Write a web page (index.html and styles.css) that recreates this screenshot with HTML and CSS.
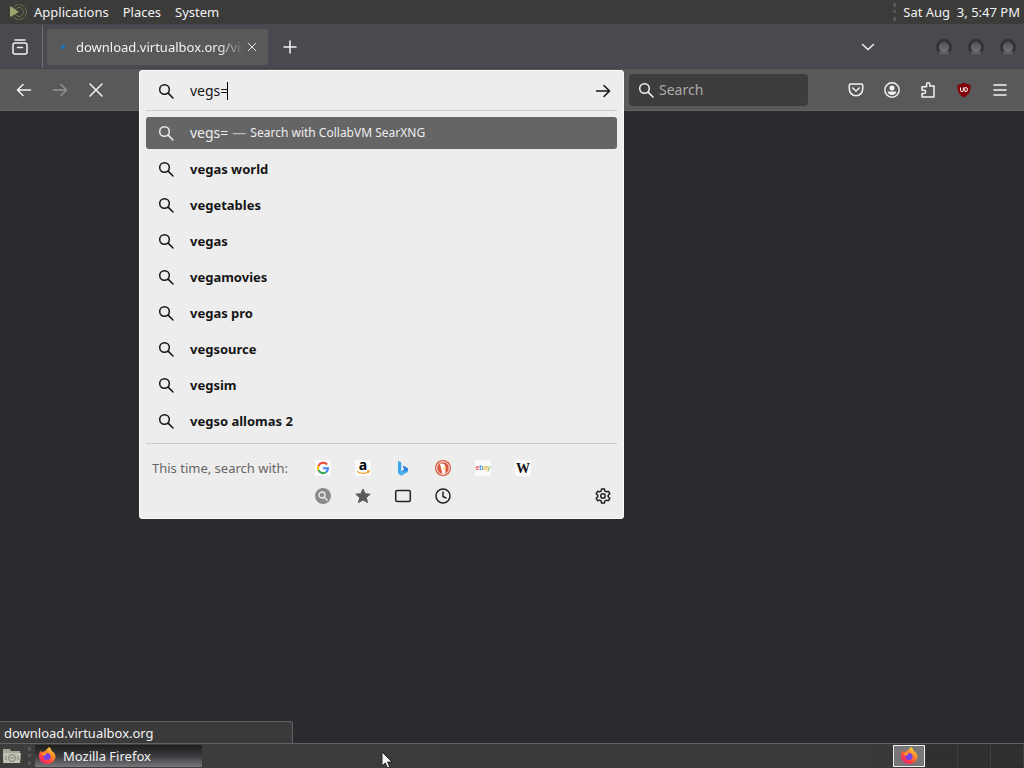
FILE: index.html
```html
<!DOCTYPE html>
<html lang="en">
<head>
<meta charset="utf-8">
<title>Mozilla Firefox</title>
<link rel="stylesheet" href="styles.css">
</head>
<body>
<svg class="defs" aria-hidden="true">
  <defs>
    <symbol id="magnifier" viewBox="0 0 16 16"><circle cx="6.5" cy="6.5" r="4.8"/><path d="M10.1 10.1 15 15"/></symbol>
    <symbol id="arrow" viewBox="0 0 16 16"><path d="M1.5 8h13M9 2.5 14.5 8 9 13.500"/></symbol>
    <symbol id="cross" viewBox="0 0 16 16"><path d="m2 2 12 12M14 2 2 14"/></symbol>
    <symbol id="firefox" viewBox="0 0 18 18">
      <linearGradient id="flame" x1="0.9" y1="0" x2="0.2" y2="1"><stop offset="0" stop-color="#fff04a"/><stop offset=".4" stop-color="#ff8a25"/><stop offset=".75" stop-color="#ff3a48"/><stop offset="1" stop-color="#e51f82"/></linearGradient>
      <path fill="url(#flame)" d="M11 0c2 1.500 2.400 3 2.600 4C15 4.600 17.500 6.800 17.500 10A8.300 8 0 0 1 1 10C.7 7 2 4.800 3 3.200c.2 1 .5 1.500 1 2 1-.7 2-.9 3-.9C7.800 2.600 9.500 1.800 11 0z"/>
      <circle cx="9" cy="9.500" r="3.600" fill="#7542e5"/>
      <path fill="#ff9b2e" d="M4 6.500c2-1.200 4-.7 5 .3-1 .2-1.800.7-2 1.500-1 .3-2.500-.3-3-1.800z"/>
    </symbol>
  </defs>
</svg>

<header class="panel">
  <nav class="panel-menus">
    <svg class="distro" viewBox="0 0 20 20"><circle cx="11" cy="10" r="7.500" fill="none" stroke="#67734b" stroke-dasharray="5 1"/><circle cx="11" cy="10" r="4.500" fill="none" stroke="#67734b"/><path d="m2 4 9 6-9 5z" fill="#9ba56b"/></svg>
    <button class="menu">Applications</button>
    <button class="menu">Places</button>
    <button class="menu">System</button>
  </nav>
  <div class="clock"><span class="grip"></span><time datetime="17:47">Sat Aug&nbsp; 3, 5:47 PM</time></div>
</header>

<div class="tabbar">
  <button class="tool view" aria-label="Recent browsing"><svg class="icon line" viewBox="0 0 16 16"><path d="M3 1h10"/><rect x="1" y="4" width="14" height="11" rx="2"/><path d="M5.500 8.500h5"/></svg></button>
  <div class="tab">
    <span class="spinner"></span>
    <span class="tab-title">download.virtualbox.org/vir</span>
    <button class="tab-close" aria-label="Close tab"><svg class="icon-small line"><use href="#cross"/></svg></button>
  </div>
  <button class="tool" aria-label="New tab"><svg class="icon line" viewBox="0 0 16 16"><path d="M8 2v12M2 8h12"/></svg></button>
  <div class="window-tools">
    <button class="tool" aria-label="List all tabs"><svg class="icon line" viewBox="0 0 16 16"><path d="m2.500 5.500 5.500 5 5.500-5"/></svg></button>
    <div class="window-buttons">
      <button class="orb" aria-label="Minimize"></button>
      <button class="orb" aria-label="Maximize"></button>
      <button class="orb" aria-label="Close"></button>
    </div>
  </div>
</div>

<div class="navbar">
  <button class="tool" aria-label="Back"><svg class="icon line flip"><use href="#arrow"/></svg></button>
  <button class="tool faded" aria-label="Forward"><svg class="icon line"><use href="#arrow"/></svg></button>
  <button class="tool" aria-label="Stop"><svg class="icon line"><use href="#cross"/></svg></button>

  <div class="url-slot">
    <div class="dropdown">
      <div class="url-row">
        <svg class="icon line"><use href="#magnifier"/></svg>
        <span class="field"><input class="url" type="text" value="vegs=" size="4" aria-label="Address"><span class="caret"></span></span>
        <button class="go" aria-label="Go"><svg class="icon line"><use href="#arrow"/></svg></button>
      </div>
      <ul class="results">
        <li class="result selected"><svg class="icon line"><use href="#magnifier"/></svg><span>vegs=</span><span class="dash">—</span><span class="action">Search with CollabVM SearXNG</span></li>
        <li class="result"><svg class="icon line"><use href="#magnifier"/></svg><span>vegas world</span></li>
        <li class="result"><svg class="icon line"><use href="#magnifier"/></svg><span>vegetables</span></li>
        <li class="result"><svg class="icon line"><use href="#magnifier"/></svg><span>vegas</span></li>
        <li class="result"><svg class="icon line"><use href="#magnifier"/></svg><span>vegamovies</span></li>
        <li class="result"><svg class="icon line"><use href="#magnifier"/></svg><span>vegas pro</span></li>
        <li class="result"><svg class="icon line"><use href="#magnifier"/></svg><span>vegsource</span></li>
        <li class="result"><svg class="icon line"><use href="#magnifier"/></svg><span>vegsim</span></li>
        <li class="result"><svg class="icon line"><use href="#magnifier"/></svg><span>vegso allomas 2</span></li>
      </ul>
      <div class="engines">
        <span class="engines-label">This time, search with:</span>
        <div class="engine-grid">
          <button class="engine" aria-label="Google"><svg class="icon" viewBox="0 0 16 16"><rect width="16" height="16" fill="#fafafa"/><g fill="none" stroke-width="2"><path stroke="#e94335" d="M12 4.500A5 5 0 0 0 3.500 6"/><path stroke="#f9bb05" d="M3.500 5.700a5 5 0 0 0 0 4.700"/><path stroke="#34a853" d="M3.500 10.200a5 5 0 0 0 7.800 1.700"/><path stroke="#4285f4" d="M8 8.200h5c0 1.800-.6 3-1.900 3.900"/></g></svg></button>
          <button class="engine" aria-label="Amazon"><svg class="icon" viewBox="0 0 16 16"><rect width="16" height="16" fill="#fafafa"/><text x="8" y="10" class="logo-a">a</text><path d="M2 11.500c4 2.500 8 2.500 11.500.3M12 11l2-.2-.5 2" fill="none" stroke="#f69a1c" stroke-width="1.200"/></svg></button>
          <button class="engine" aria-label="Bing"><svg class="icon" viewBox="0 0 16 16"><path d="m3 1 3.200 1.200v9L3 13z" fill="#3aa5ee"/><path d="m7.500 5.500 4 1.800c2 1 2.200 3.700.5 5L6 15.500 3 13l3.200-1.800 3-1.500z" fill="#2b7fdd"/><path d="m3 13 3.200-1.800 3 .3 3.800-1c0 .8-.3 1.500-1 2L6 15.500z" fill="#4bb4ee"/></svg></button>
          <button class="engine" aria-label="DuckDuckGo"><svg class="icon" viewBox="0 0 16 16"><circle cx="8" cy="8" r="8" fill="#d9573e"/><circle cx="8" cy="8" r="6.300" fill="#d9573e" stroke="#fff" stroke-width="1"/><path d="M5 4c2-1 5-.5 5.500 3l-.3 6.500-2.700.3z" fill="#fff"/><path d="m8 7.500 4 .5-3.500 1.500z" fill="#ffc42d"/></svg></button>
          <button class="engine" aria-label="eBay"><svg class="icon" viewBox="0 0 16 16"><rect width="16" height="16" fill="#fafafa"/><text x="8" y="10" class="logo-ebay"><tspan fill="#e53238">e</tspan><tspan fill="#0064d2">b</tspan><tspan fill="#f5af02">a</tspan><tspan fill="#86b817">y</tspan></text></svg></button>
          <button class="engine" aria-label="Wikipedia"><svg class="icon" viewBox="0 0 16 16"><rect width="16" height="16" fill="#fafafa"/><text x="8" y="13" class="logo-w">W</text></svg></button>
          <button class="engine" aria-label="CollabVM SearXNG"><svg class="icon" viewBox="0 0 16 16"><circle cx="8" cy="8" r="8" fill="#8b8b8b"/><circle cx="7" cy="7" r="3" fill="none" stroke="#eee" stroke-width="1.300"/><path d="m9.300 9.300 3.200 3.200" stroke="#eee" stroke-width="1.300"/></svg></button>
          <button class="engine" aria-label="Bookmarks"><svg class="icon" viewBox="0 0 16 16"><path fill="#5b5b5b" stroke="#5b5b5b" stroke-linejoin="round" d="m8 1 2.100 4.700 5.100.5-3.900 3.400 1.200 5L8 12l-4.500 2.600 1.200-5L.8 6.200l5.100-.5z"/></svg></button>
          <button class="engine" aria-label="Tabs"><svg class="icon line" viewBox="0 0 16 16"><rect x=".7" y="2.500" width="14.600" height="11" rx="1.500"/></svg></button>
          <button class="engine" aria-label="History"><svg class="icon line" viewBox="0 0 16 16"><circle cx="8" cy="8" r="7"/><path d="M8 4v4.500l3 1.500"/></svg></button>
        </div>
        <button class="engine settings" aria-label="Search settings"><svg class="icon line" viewBox="0 0 16 16"><path stroke-linejoin="round" d="M6.600 1h2.800l.5 2.100 1.400.8 2.100-.6 1.400 2.400-1.600 1.500v1.600l1.600 1.500-1.400 2.400-2.100-.6-1.400.8L9.400 15H6.600l-.5-2.100-1.400-.8-2.100.6-1.400-2.400 1.600-1.500V7.200L1.200 5.700l1.400-2.400 2.100.6 1.400-.8z"/><circle cx="8" cy="8" r="2.200"/></svg></button>
      </div>
    </div>
  </div>

  <label class="search">
    <svg class="icon line"><use href="#magnifier"/></svg>
    <input class="search-input" type="text" placeholder="Search" aria-label="Search">
  </label>

  <div class="nav-tools">
    <button class="tool" aria-label="Save to Pocket"><svg class="icon line" viewBox="0 0 16 16"><path stroke-linejoin="round" d="M2.500 2h11c.7 0 1.200.5 1.200 1.200V7c0 4-3 6.800-6.700 6.800S1.300 11 1.300 7V3.200C1.300 2.500 1.800 2 2.500 2z"/><path d="M4.700 6 8 9l3.300-3"/></svg></button>
    <button class="tool" aria-label="Account"><svg class="icon line" viewBox="0 0 16 16"><circle cx="8" cy="8" r="7.200"/><circle cx="8" cy="6" r="2.500" fill="currentColor" stroke="none"/><path d="M3.500 9.500h9c-.4 2.200-2 3.500-4.500 3.500s-4.100-1.300-4.500-3.500z" fill="currentColor" stroke="none"/></svg></button>
    <button class="tool" aria-label="Extensions"><svg class="icon line" viewBox="0 0 16 16"><path stroke-linejoin="round" d="M6.500 4V2.500a1.700 1.700 0 0 1 3.400 0V4H14v11H2v-3.500h2a1.600 1.600 0 0 0 0-3.300H2V4.700h4.500z"/></svg></button>
    <button class="tool" aria-label="uBlock Origin"><svg class="icon" viewBox="0 0 16 16"><path d="M8 .5C10 2 12 2.500 14.500 2.500 14.800 9 13.500 12.500 8 15.500 2.500 12.500 1.200 9 1.500 2.500 4 2.500 6 2 8 .5z" fill="#800006"/><path d="M4.500 5.500v2.700a1.400 1.400 0 0 0 2.800 0V5.500m1.500 0v4h.8a2 2 0 0 0 0-4z" fill="none" stroke="#fff"/></svg></button>
    <button class="tool" aria-label="Menu"><svg class="icon line" viewBox="0 0 16 16"><path d="M2 3h12M2 8h12M2 13h12"/></svg></button>
  </div>
</div>

<main class="content"><div class="status">download.virtualbox.org</div></main>

<footer class="taskbar">
  <button class="files" aria-label="Show files"><svg class="folder" viewBox="0 0 20 18"><path d="M1 2h7l1 2h9v12H1z" fill="#a3a898"/><path d="M1 6h18l-1 10H2z" fill="#c0c4b4"/><circle cx="10" cy="11" r="3.500" fill="none" stroke="#7e8376"/><path d="M8 11h4M4 9v4m12-4v4" stroke="#7e8376"/></svg></button>
  <span class="grip"></span>
  <button class="task"><svg class="fox"><use href="#firefox"/></svg><span>Mozilla Firefox</span></button>
  <div class="workspaces">
    <button class="workspace current" aria-label="Workspace 1"><svg class="fox"><use href="#firefox"/></svg></button>
    <button class="workspace" aria-label="Workspace 2"></button>
    <button class="workspace" aria-label="Workspace 3"></button>
    <button class="workspace" aria-label="Workspace 4"></button>
  </div>
  <svg class="pointer" viewBox="0 0 12 18"><path d="M1 1v14l3.300-3 2.200 5 2.300-1-2.200-5H11z" fill="#f5f5f5" stroke="#222"/></svg>
</footer>
</body>
</html>
```

FILE: styles.css
```css
* { box-sizing: border-box; }
body {
  margin: 0;
  min-height: 100vh;
  display: flex;
  flex-direction: column;
  background: #2b2a2f;
  color: #f2f2f2;
  font: 13px/20px "Noto Sans", sans-serif;
}
button, input { font: inherit; color: inherit; background: none; border: 0; padding: 0; margin: 0; outline: 0; }
button { display: flex; align-items: center; justify-content: center; }
.defs { position: absolute; width: 0; height: 0; }
.icon { width: 16px; height: 16px; flex: none; overflow: visible; }
.icon-small { width: 10px; height: 10px; }
.line { fill: none; stroke: currentColor; stroke-width: 1.5; stroke-linecap: round; }
.flip { transform: scaleX(-1); }

.panel { height: 24px; display: flex; align-items: center; justify-content: space-between; background: #3b3b3a; padding: 0 4px 0 8px; }
.panel-menus { display: flex; align-items: center; }
.distro { width: 20px; height: 20px; margin-right: 6px; }
.menu { margin-right: 14px; }
.clock { display: flex; align-items: center; gap: 7px; }
.grip { width: 3px; height: 18px; border-left: 3px dotted #555; }

.tabbar { height: 45px; display: flex; align-items: center; padding-top: 2px; background: #4a494f; border-bottom: 1px solid #444; }
.tool { width: 36px; height: 32px; flex: none; }
.view { width: 43px; height: 42px; padding-right: 3px; border-right: 1px solid #717174; }
.tab { width: 221px; height: 36px; margin: 0 4px; display: flex; align-items: center; background: #59595a; border-radius: 3px; padding: 0 8px 0 14px; }
.spinner { width: 4px; height: 4px; margin-right: 11px; background: #2377b8; border-radius: 50% 0 50% 50%; }
.tab-title { flex: 1; overflow: hidden; white-space: nowrap; mask-image: linear-gradient(to right, #000 85%, transparent); }
.tab-close { width: 16px; height: 16px; }
.window-tools { margin-left: auto; display: flex; align-items: center; padding-right: 8px; }
.window-buttons { display: flex; gap: 16px; margin-left: 50px; }
.orb { width: 16px; height: 16px; border-radius: 50%; border: 3px solid #333439; border-bottom-color: #5d5d62; background: linear-gradient(#55565b, #707076); }

.navbar { height: 42px; display: flex; align-items: center; background: #59595a; border-bottom: 1px solid #656566; padding: 0 6px; }
.faded { color: #929292; }
.url-slot { position: relative; flex: 1; align-self: stretch; margin: 0 5px 0 25px; }
.dropdown { position: absolute; z-index: 2; top: 1px; left: 0; right: 0; background: #ededed; color: #151515; border: 1px solid #fafafa; border-radius: 3px; padding: 0 6px 8px; }
.url-row { height: 40px; display: flex; align-items: center; gap: 16px; padding: 0 6px 0 12px; border-bottom: 1px solid #cdcdcd; }
.field { flex: 1; display: flex; align-items: center; }
.url { width: 37px; font-size: 14px; }
.caret { width: 1px; height: 18px; background: #000; }
.go { width: 16px; height: 16px; }
.results { list-style: none; margin: 0; padding: 6px 0; display: flex; flex-direction: column; gap: 4px; border-bottom: 1px solid #cdcdcd; }
.result { height: 32px; display: flex; align-items: center; padding-left: 12px; border-radius: 3px; font-weight: 700; }
.result .icon { margin-right: 16px; }
.selected { background: #656565; color: #eee; font-size: 14px; font-weight: 400; }
.dash { margin: 0 4px; color: #bbb; }
.action { font-size: 12px; }
.engines { display: flex; padding: 10px 0 0 6px; color: #666; }
.engines-label { width: 151px; line-height: 28px; }
.engine-grid { display: grid; grid-template-columns: repeat(6, 40px); grid-auto-rows: 28px; color: #222; }
.engine { width: 40px; height: 28px; }
.settings { margin: 28px -6px 0 auto; color: #222; }
.logo-a { font: bold 14px "Open Sans", sans-serif; text-anchor: middle; fill: #000; }
.logo-ebay { font: 7px "Liberation Sans", sans-serif; text-anchor: middle; }
.logo-w { font: bold 14px "Liberation Serif", serif; text-anchor: middle; fill: #111; }
.search { width: 179px; height: 32px; display: flex; align-items: center; gap: 5px; padding: 0 9px; background: #3d3d3d; border-radius: 4px; }
.search-input { width: 100%; min-width: 0; font-size: 14px; }
.search-input::placeholder { color: #aaa; opacity: 1; }
.nav-tools { display: flex; margin-left: 30px; }

.content { flex: 1; display: flex; align-items: flex-end; }
.status { width: 293px; height: 22px; padding: 1px 0 0 4px; background: #3a3a3a; border: 1px solid #606064; border-width: 1px 1px 0 0; border-top-right-radius: 3px; }

.taskbar { position: relative; height: 25px; display: flex; align-items: center; background: linear-gradient(to right, #3d3d3d, #393939 85%, #2d2d2e); border-top: 1px solid #626267; }
.files { width: 24px; margin-right: 4px; }
.folder { width: 20px; height: 18px; }
.task { width: 167px; height: 22px; margin-left: 4px; justify-content: flex-start; gap: 7px; padding-left: 3px; background: linear-gradient(#1e1e1f, #3b3b3e 50%, #77777c); }
.fox { width: 18px; height: 18px; flex: none; }
.workspaces { display: flex; gap: 1px; margin-left: auto; }
.workspace { width: 32px; height: 22px; background: #303031; border-right: 1px solid #414142; }
.current { border: 1px solid #eee; background: #77777a; }
.pointer { position: absolute; left: 381px; top: 7px; width: 12px; height: 18px; }
```
